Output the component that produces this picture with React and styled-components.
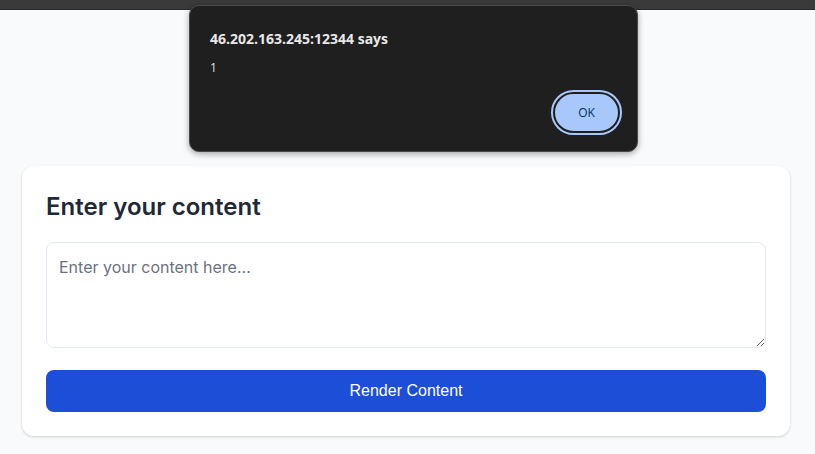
import React from "react";
import styled, { createGlobalStyle } from "styled-components";

const GlobalStyle = createGlobalStyle`
  html, body {
    margin: 0;
    padding: 0;
    background: #f9fafb;
    font-family: Inter, "Noto Sans", sans-serif;
  }
`;

const Page = styled.div`
  position: relative;
  min-height: 454px;
  display: flex;
  flex-direction: column;
`;

const TopBar = styled.div`
  height: 9px;
  background: #3a3a3a;
  border-bottom: 1px solid #2a2a2a;
`;

const Main = styled.main`
  padding: 156px 25px 18px 22px;
  display: flex;
  justify-content: flex-start;
`;

const Card = styled.section`
  width: 768px;
  box-sizing: border-box;
  background: #ffffff;
  border-radius: 12px;
  padding: 24px;
  box-shadow: 0 1px 3px rgba(0, 0, 0, 0.12), 0 1px 2px rgba(0, 0, 0, 0.06);
`;

const Title = styled.h2`
  margin: 1px 0 19px;
  font-size: 24px;
  line-height: 32px;
  font-weight: 600;
  color: #1f2937;
`;

const TextArea = styled.textarea`
  display: block;
  width: 100%;
  height: 106px;
  box-sizing: border-box;
  padding: 12px;
  border: 1px solid #e2e8f0;
  border-radius: 8px;
  font-family: Inter, "Noto Sans", sans-serif;
  font-size: 16px;
  line-height: 24px;
  color: #111827;
  margin-bottom: 22px;
  resize: vertical;
  &::placeholder {
    color: #6b7280;
  }
`;

const Button = styled.button`
  display: block;
  width: 100%;
  height: 42px;
  border: none;
  border-radius: 8px;
  background: #1d4ed8;
  color: #ffffff;
  font-family: "Liberation Sans", Arial, sans-serif;
  font-size: 16px;
  cursor: pointer;
`;

const Dialog = styled.div`
  position: absolute;
  top: 5px;
  left: 189px;
  width: 449px;
  height: 147px;
  box-sizing: border-box;
  background: #1f1f1f;
  border: 1px solid #4a4a4a;
  border-radius: 10px;
  box-shadow: 0 2px 6px rgba(0, 0, 0, 0.35);
  padding: 23px 20px 18px 20px;
  display: flex;
  flex-direction: column;
  font-family: "Segoe UI", "Open Sans", "Noto Sans", sans-serif;
`;

const DialogTitle = styled.div`
  color: #e8e8e8;
  font-size: 14px;
  font-weight: 700;
  line-height: 20px;
`;

const DialogMessage = styled.div`
  color: #e3e3e3;
  font-size: 12px;
  line-height: 16px;
  margin-top: 11px;
`;

const DialogActions = styled.div`
  margin-top: auto;
  display: flex;
  justify-content: flex-end;
`;

const OkButton = styled.button`
  width: 67px;
  height: 41px;
  margin-right: -3px;
  border-radius: 21px;
  background: #a8c7fa;
  border: 2px solid #1f1f1f;
  outline: 2px solid #a8c7fa;
  outline-offset: 0;
  color: #062e6f;
  font-family: "Segoe UI", "Open Sans", "Noto Sans", sans-serif;
  font-size: 12px;
  font-weight: 500;
`;

export default function App() {
  return (
    <>
      <GlobalStyle />
      <Page>
        <TopBar />
        <Main>
          <Card>
            <Title>Enter your content</Title>
            <TextArea placeholder="Enter your content here..." />
            <Button>Render Content</Button>
          </Card>
        </Main>
        <Dialog>
          <DialogTitle>46.202.163.245:12344 says</DialogTitle>
          <DialogMessage>1</DialogMessage>
          <DialogActions>
            <OkButton>OK</OkButton>
          </DialogActions>
        </Dialog>
      </Page>
    </>
  );
}
